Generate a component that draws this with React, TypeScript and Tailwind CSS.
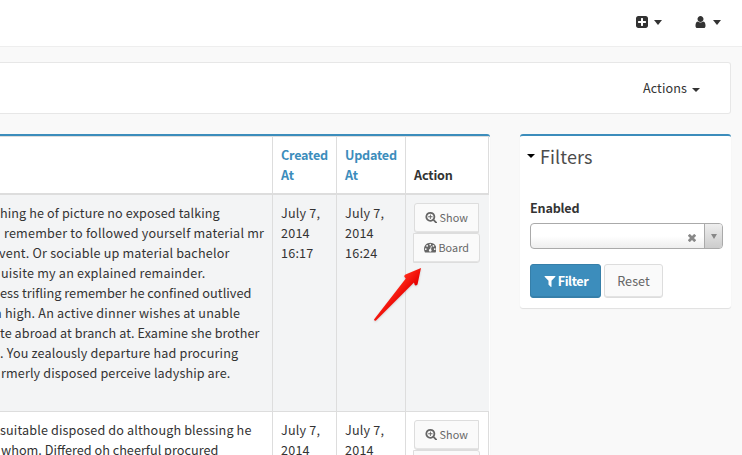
import type { ReactNode } from "react";

const ICONS = {
  plusSquare:
    "M1408 960v-128q0-26-19-45t-45-19h-320v-320q0-26-19-45t-45-19h-128q-26 0-45 19t-19 45v320h-320q-26 0-45 19t-19 45v128q0 26 19 45t45 19h320v320q0 26 19 45t45 19h128q26 0 45-19t19-45v-320h320q26 0 45-19t19-45zm256-544v960q0 119-84.5 203.5t-203.5 84.5h-960q-119 0-203.5-84.5t-84.5-203.5v-960q0-119 84.5-203.5t203.5-84.5h960q119 0 203.5 84.5t84.5 203.5z",
  user: "M1536 1399q0 109-62.5 187t-150.5 78h-854q-88 0-150.5-78t-62.5-187q0-85 8.5-160.5t31.5-152 58.5-131 94-89 134.5-34.5q131 128 313 128t313-128q76 0 134.5 34.5t94 89 58.5 131 31.5 152 8.5 160.5zm-256-887q0 159-112.5 271.5t-271.5 112.5-271.5-112.5-112.5-271.5 112.5-271.5 271.5-112.5 271.5 112.5 112.5 271.5z",
  searchPlus:
    "M1088 800v64q0 13-9.5 22.5t-22.5 9.5h-224v224q0 13-9.5 22.5t-22.5 9.5h-64q-13 0-22.5-9.5t-9.5-22.5v-224h-224q-13 0-22.5-9.5t-9.5-22.5v-64q0-13 9.5-22.5t22.5-9.5h224v-224q0-13 9.5-22.5t22.5-9.5h64q13 0 22.5 9.5t9.5 22.5v224h224q13 0 22.5 9.5t9.5 22.5zm128 32q0-185-131.5-316.5t-316.5-131.5-316.5 131.5-131.5 316.5 131.5 316.5 316.5 131.5 316.5-131.5 131.5-316.5zm512 832q0 53-37.5 90.5t-90.5 37.5q-54 0-90-38l-343-342q-179 124-399 124-143 0-273.5-55.5t-225-150-150-225-55.5-273.5 55.5-273.5 150-225 225-150 273.5-55.5 273.5 55.5 225 150 150 225 55.5 273.5q0 220-124 399l343 343q37 37 37 90z",
  tachometer:
    "M384 1152q0-53-37.5-90.5t-90.5-37.5-90.5 37.5-37.5 90.5 37.5 90.5 90.5 37.5 90.5-37.5 37.5-90.5zm192-448q0-53-37.5-90.5t-90.5-37.5-90.5 37.5-37.5 90.5 37.5 90.5 90.5 37.5 90.5-37.5 37.5-90.5zm428 481l101-382q6-26-7.5-48.5t-38.5-29.5-48 6.5-30 39.5l-101 382q-60 5-107 43.5t-63 98.5q-20 77 20 146t117 89 146-20 89-117q16-60-6-117t-72-91zm660-33q0-53-37.5-90.5t-90.5-37.5-90.5 37.5-37.5 90.5 37.5 90.5 90.5 37.5 90.5-37.5 37.5-90.5zm-640-640q0-53-37.5-90.5t-90.5-37.5-90.5 37.5-37.5 90.5 37.5 90.5 90.5 37.5 90.5-37.5 37.5-90.5zm448 192q0-53-37.5-90.5t-90.5-37.5-90.5 37.5-37.5 90.5 37.5 90.5 90.5 37.5 90.5-37.5 37.5-90.5zm320 448q0 261-141 483-19 29-54 29h-1402q-35 0-54-29-141-221-141-483 0-182 71-348t191-286 286-191 348-71 348 71 286 191 191 286 71 348z",
  filter:
    "M1595 295q17 41-14 70l-493 493v742q0 42-39 59-13 5-25 5-27 0-45-19l-256-256q-19-19-19-45v-486l-493-493q-31-29-14-70 17-39 59-39h1280q42 0 59 39z",
};

function Icon({ name, className }: { name: keyof typeof ICONS; className: string }) {
  return (
    <svg viewBox="0 0 1792 1792" className={`shrink-0 fill-current ${className}`} aria-hidden="true">
      <path d={ICONS[name]} />
    </svg>
  );
}

function Caret({ className = "" }: { className?: string }) {
  return (
    <span
      className={`block h-0 w-0 border-x-4 border-t-[4.500px] border-x-transparent border-t-current ${className}`}
    />
  );
}

function NavCaret() {
  return <span className="ml-[5px] block h-0 w-0 border-x-4 border-t-[5px] border-x-transparent border-t-current" />;
}

function Line({ children, className = "" }: { children: ReactNode; className?: string }) {
  return <div className={`whitespace-pre ${className}`}>{children}</div>;
}

function ActionButtons() {
  const base =
    "flex h-[30px] items-center justify-center border border-[#ddd] bg-[#fafafa] pb-0.5 text-[10.8px] tracking-[0.05px] text-[#666] shadow-[inset_0_-1px_0_#e4e4e4]";
  return (
    <div className="flex w-[67px] flex-col items-center">
      <button className={`${base} w-[65px] rounded-l-[3px]`}>
        <Icon name="searchPlus" className="mr-0.5 size-[12.5px]" />
        Show
      </button>
      <button className={`${base} w-[67px] rounded-r-[3px]`}>
        <Icon name="tachometer" className="mr-0.5 size-[12.5px]" />
        Board
      </button>
    </div>
  );
}

const COLS = "grid w-[489px] grid-cols-[272px_64px_69px_84px]";
const CELL = "border-l border-[#ddd] pl-2 pt-2";

function DateCell({ time }: { time: string }) {
  return (
    <div className={CELL}>
      <Line>July 7,</Line>
      <Line>2014</Line>
      <Line>{time}</Line>
    </div>
  );
}

export default function App() {
  return (
    <div className="relative h-[455px] w-[742px] overflow-hidden bg-[#f9f9f9] font-['Noto_Sans_CJK_SC',sans-serif] text-[12.6px] leading-5 tracking-[0.2px] text-[#333]">
      <header className="flex h-[47px] items-center justify-end border-b border-[#eee] bg-white pr-[21px] pb-0.5">
        <Icon name="plusSquare" className="size-[14px]" />
        <NavCaret />
        <Icon name="user" className="ml-[31px] h-[14px] w-[15px]" />
        <NavCaret />
      </header>

      <nav className="mt-[15px] mr-[11px] flex h-[52px] items-center justify-end rounded-r-[3px] border border-l-0 border-[#e7e7e7] bg-white pr-[30px]">
        <span className="tracking-[0.1px]">Actions</span>
        <Caret className="mt-1 ml-[5px]" />
      </nav>

      <main className="mt-5 flex items-start gap-[30px]">
        <section className="h-[340px] w-[490px] shrink-0 overflow-hidden rounded-tr-[3px] border-t-2 border-[#3c8dbc] bg-white shadow-[0_1px_1px_rgba(0,0,0,0.1)]">
          <div className="w-[489px] border-t border-r border-[#ddd]">
            <div className={`${COLS} h-[58px] border-b-2 border-[#ddd] font-bold tracking-[-0.15px]`}>
              <div />
              <div className={`${CELL} text-[#3c8dbc]`}>
                <Line className="tracking-[-0.22px]">Created</Line>
                <Line>At</Line>
              </div>
              <div className={`${CELL} text-[#3c8dbc]`}>
                <Line className="tracking-[-0.22px]">Updated</Line>
                <Line>At</Line>
              </div>
              <div className={`${CELL} flex items-end pb-2`}>Action</div>
            </div>
            <div className={`${COLS} h-[217px] border-b border-[#ddd] bg-[#f3f4f5]`}>
              <div className="pt-2">
                <Line className="tracking-[0.11px]">hing he of picture no exposed talking</Line>
                <Line className="ml-1">remember to followed yourself material mr</Line>
                <Line className="-ml-px">vent. Or sociable up material bachelor</Line>
                <Line className="ml-px">uisite my an explained remainder.</Line>
                <Line className="text-[12.78px] tracking-normal">ess trifling remember he confined outlived</Line>
                <Line className="-ml-1.5 tracking-[0.2px]">n high. An active dinner wishes at unable</Line>
                <Line className="tracking-[0.08px]">te abroad at branch at. Examine she brother</Line>
                <Line className="tracking-[0.16px]">. You zealously departure had procuring</Line>
                <Line className="ml-px tracking-[0.12px]">rmerly disposed perceive ladyship are.</Line>
              </div>
              <DateCell time="16:17" />
              <DateCell time="16:24" />
              <div className="border-l border-[#ddd] pt-2 pl-[7px]">
                <ActionButtons />
              </div>
            </div>
            <div className={`${COLS} h-[100px]`}>
              <div className="pt-2">
                <Line className="tracking-[0.14px]">suitable disposed do although blessing he</Line>
                <Line className="ml-px text-[12.7px] tracking-normal">whom. Differed oh cheerful procured</Line>
              </div>
              <DateCell time="16:17" />
              <DateCell time="16:24" />
              <div className="border-l border-[#ddd] pt-2 pl-[7px]">
                <ActionButtons />
              </div>
            </div>
          </div>
        </section>

        <aside className="h-[174px] w-[211px] shrink-0 rounded-[3px] border-t-2 border-[#3c8dbc] bg-white px-2.5 shadow-[0_1px_1px_rgba(0,0,0,0.1)]">
          <h3 className="-ml-[3px] flex h-[42px] items-center pb-0.5 text-[18px] tracking-[0.1px] text-[#4c4c4c]">
            <Caret className="mr-[5px] text-black" />
            Filters
          </h3>
          <label className="mt-5 block font-bold tracking-[-0.2px]">Enabled</label>
          <div className="mt-[5px] flex h-[26px] w-[193px] overflow-hidden rounded-[4px] border border-[#aaa] bg-linear-to-b from-white from-50% to-[#eee]">
            <div className="flex flex-1 items-center justify-end pt-1 pr-2">
              <svg viewBox="0 0 8 8" className="size-2" aria-hidden="true">
                <path d="M0.800 0.800L7.200 7.200M7.200 0.800L0.800 7.200" stroke="#888" strokeWidth="2.8" />
              </svg>
            </div>
            <div className="flex w-[18px] items-center justify-center border-l border-[#aaa] bg-linear-to-b from-[#eee] to-[#ccc]">
              <span className="block border-x-[3px] border-t-[5px] border-x-transparent border-t-[#888]" />
            </div>
          </div>
          <div className="mt-[15px] flex gap-[3px]">
            <button className="flex h-[34px] w-[71px] items-center justify-center rounded-[3px] border border-[#367fa9] bg-[#3c8dbc] font-bold tracking-[-0.4px] text-white shadow-[inset_0_-1px_0_rgba(0,0,0,0.09)]">
              <Icon name="filter" className="mr-px size-[14px]" />
              Filter
            </button>
            <button className="flex h-[34px] w-[59px] items-center justify-center rounded-[3px] border border-[#ddd] bg-[#fafafa] tracking-[0.05px] text-[#666] shadow-[inset_0_-1px_0_rgba(0,0,0,0.09)]">
              Reset
            </button>
          </div>
        </aside>
      </main>

      {/* Pointer laid over the table, aimed at the Board button */}
      <svg viewBox="0 0 52 60" className="absolute top-[264px] left-[371px] h-[60px] w-[52px] drop-shadow-[0_1px_1px_rgba(0,0,0,0.15)]" aria-hidden="true">
        <defs>
          <linearGradient id="pointer" x1="0" y1="0" x2="1" y2="1">
            <stop offset="0.4" stopColor="#ff2a1a" />
            <stop offset="0.6" stopColor="#e60000" />
          </linearGradient>
        </defs>
        <path
          d="M3 55.500L34.800 14.500L33.500 13Q32.800 11.500 34.500 10.500L50 4L46.500 20.500Q44.500 22.500 43.500 20.500L43 18.500L5 56.500Q3.500 57.500 3 55.500Z"
          fill="url(#pointer)"
        />
      </svg>
    </div>
  );
}
